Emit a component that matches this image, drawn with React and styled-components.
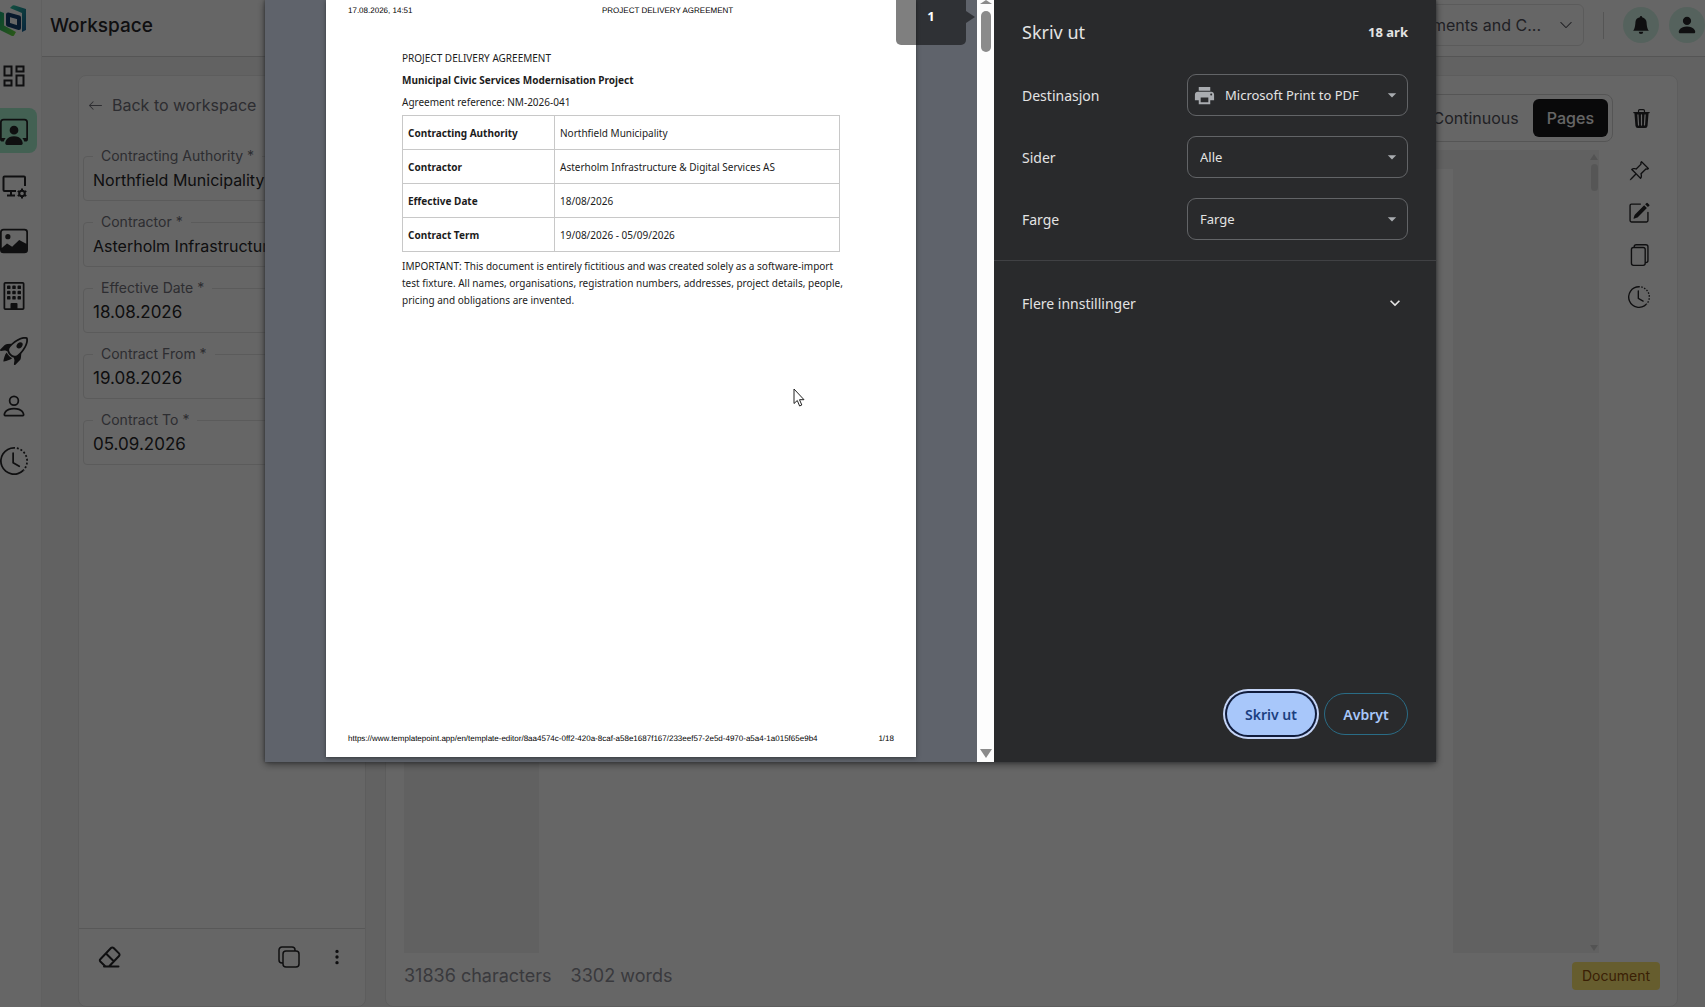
import React from "react";
import styled, { createGlobalStyle } from "styled-components";
import {
  BsPersonWorkspace, BsImage, BsBuilding, BsRocketTakeoff, BsPerson, BsClockHistory,
  BsTrash3Fill, BsPinAngle, BsPencilSquare, BsFiles, BsBellFill, BsPersonFill,
  BsArrowLeft, BsChevronDown, BsThreeDotsVertical,
} from "react-icons/bs";
import { MdPrint, MdExpandMore, MdArrowDropDown } from "react-icons/md";

const ui = `Inter, "Liberation Sans", sans-serif`;
const system = `"Noto Sans", "Open Sans", sans-serif`;

const GlobalStyle = createGlobalStyle`
  *, *::before, *::after { box-sizing: border-box; }
  html, body, #root { height: 100%; }
  body { margin: 0; overflow: hidden; font-family: ${ui}; background: #f5f5f5; color: #27272a; }
  button, input, select { font: inherit; color: inherit; }
`;

const Shell = styled.div`
  display: flex;
  height: 100vh;
`;

const Sidebar = styled.nav`
  flex: 0 0 42px;
  display: flex;
  flex-direction: column;
  gap: 10px;
  background: #fff;
  border-right: 1px solid #f0f0f0;
`;

const LogoLink = styled.a`
  display: block;
  height: 43px;
`;

const NavButton = styled.button`
  display: flex;
  align-items: center;
  width: 37px;
  height: 45px;
  padding: 0;
  border: 0;
  border-radius: 0 8px 8px 0;
  color: #27272a;
  background: ${(p) => (p.$active ? "#a7f3d0" : "transparent")};
  svg { width: 28px; height: 28px; }
`;

const Main = styled.div`
  flex: 1;
  min-width: 0;
  display: flex;
  flex-direction: column;
`;

const Header = styled.header`
  flex: 0 0 57px;
  display: flex;
  align-items: center;
  padding: 0 0 6px 8px;
  background: #fff;
  border-bottom: 1px solid #d4d4d4;
`;

const Title = styled.h1`
  flex: 1;
  margin: 0;
  font-size: 19px;
  font-weight: 500;
`;

const ProjectPicker = styled.button`
  display: flex;
  align-items: center;
  justify-content: space-between;
  width: 320px;
  height: 42px;
  padding: 0 10px;
  border: 1px solid #e4e4e4;
  border-radius: 6px;
  background: #fff;
  font-size: 16px;
  color: #52525b;
  text-align: right;
  span { flex: 1; padding-right: 18px; }
`;

const HeaderRule = styled.div`
  width: 1px;
  height: 27px;
  margin: 0 19px;
  background: #d4d4d4;
`;

const RoundButton = styled.button`
  display: grid;
  place-items: center;
  width: 36px;
  height: 36px;
  margin-right: 10px;
  padding: 0;
  border: 0;
  border-radius: 50%;
  background: #d5f5e8;
  &:last-child { margin-right: 0; }
`;

const Content = styled.main`
  flex: 1;
  min-height: 0;
  display: flex;
  gap: 19px;
  padding: 18px 27px 0 36px;
`;

const Card = styled.section`
  display: flex;
  flex-direction: column;
  background: #fff;
  border: 1px solid #e8e8e8;
  border-radius: 8px;
`;

const DetailsCard = styled(Card)`
  flex: 0 0 288px;
`;

const BackLink = styled.a`
  display: flex;
  align-items: center;
  gap: 9px;
  padding: 19px 9px 0;
  font-size: 16px;
  line-height: 20px;
  color: #71717a;
  text-decoration: none;
`;

const Form = styled.form`
  flex: 1;
  display: flex;
  flex-direction: column;
  gap: 13px;
  padding: 33px 4px 0;
`;

const Field = styled.fieldset`
  height: 53px;
  min-width: 0;
  margin: 0;
  padding: 0 9px;
  border: 1px solid #e4e4e4;
  border-radius: 4px;
`;

const Legend = styled.legend`
  padding: 0 8px;
  font-size: 14px;
  line-height: 16px;
  color: #71717a;
`;

const FieldInput = styled.input`
  display: block;
  width: 100%;
  height: 32px;
  padding: 0;
  border: 0;
  outline: 0;
  background: transparent;
  font-size: ${(p) => (p.$date ? 17 : 16)}px;
`;

const CardActions = styled.div`
  display: flex;
  align-items: center;
  gap: 28px;
  height: 78px;
  padding: 0 19px 22px;
  border-top: 1px solid #dcdcdc;
`;

const IconButton = styled.button`
  display: grid;
  place-items: center;
  padding: 0;
  border: 0;
  background: none;
  color: #27272a;
  margin-right: ${(p) => (p.$push ? "auto" : "0")};
`;

const EditorCard = styled(Card)`
  flex: 1;
  min-width: 0;
  padding: 18px 17px 0 18px;
`;

const Toolbar = styled.div`
  display: flex;
  justify-content: flex-end;
  align-items: center;
  gap: 19px;
  height: 48px;
  padding-right: 9px;
`;

const Segmented = styled.div`
  display: flex;
  align-items: center;
  height: 48px;
  padding: 4px;
  border: 1px solid #d4d4d4;
  border-radius: 8px;
`;

const Segment = styled.button`
  height: 38px;
  padding: 0 14px;
  border: 0;
  border-radius: 6px;
  font-size: 16px;
  font-weight: ${(p) => (p.$on ? 500 : 400)};
  color: ${(p) => (p.$on ? "#fff" : "#52525b")};
  background: ${(p) => (p.$on ? "#18181b" : "transparent")};
`;

const EditorBody = styled.div`
  flex: 1;
  min-height: 0;
  display: flex;
  padding-top: 8px;
`;

const Canvas = styled.div`
  flex: 1;
  display: flex;
  padding: 19px 0 0 135px;
  background: #f3f3f3;
`;

const Paper = styled.div`
  flex: 1;
  margin-right: 136px;
  background: #fff;
`;

const CanvasScroll = styled.div`
  display: flex;
  flex-direction: column;
  align-items: center;
  justify-content: space-between;
  width: 10px;
  margin-top: -15px;
  padding-bottom: 2px;
  color: #d0d0d0;
`;

const ScrollGroup = styled.div`
  display: flex;
  flex-direction: column;
  align-items: center;
  gap: ${(p) => p.$gap}px;
`;

const Thumb = styled.div`
  width: ${(p) => p.$w}px;
  height: ${(p) => p.$h}px;
  border-radius: 5px;
  background: ${(p) => p.$color};
`;

const Tools = styled.div`
  flex: 0 0 61px;
  display: flex;
  flex-direction: column;
  align-items: center;
  gap: 20px;
  padding: 10px 0 0 18px;
`;

const EditorFooter = styled.footer`
  display: flex;
  align-items: center;
  gap: 19px;
  height: 53px;
  padding-bottom: 8px;
  font-size: 18px;
  color: #909098;
`;

const Tag = styled.span`
  margin-left: auto;
  padding: 0 10px;
  border-radius: 4px;
  background: #ffe873;
  color: #92500c;
  font-size: 14px;
  line-height: 28px;
`;

const Backdrop = styled.div`
  position: fixed;
  inset: 0;
  display: flex;
  justify-content: center;
  align-items: flex-start;
  background: rgba(0, 0, 0, 0.6);
`;

const Dialog = styled.div`
  display: flex;
  width: 1171px;
  height: 762px;
  margin-right: 4px;
  box-shadow: 0 0 3px #303236, 0 2px 8px rgba(0, 0, 0, 0.5);
  font-family: ${system};
`;

const Preview = styled.div`
  position: relative;
  flex: 1;
  display: flex;
  justify-content: center;
  padding: 0 61px 5px;
  background: #5f636b;
`;

const Sheet = styled.article`
  flex: 1;
  display: flex;
  flex-direction: column;
  padding: 5px 22px 12px;
  background: #fff;
  color: #1c1c1c;
  box-shadow: 0 1px 4px #33363a;
`;

const SheetLine = styled.div`
  display: grid;
  grid-template-columns: ${(p) => (p.$foot ? "1fr auto" : "254px 1fr")};
  font: 8px/12px "Liberation Sans", sans-serif;
  text-rendering: geometricPrecision;
  color: #000;
`;

const SheetBody = styled.div`
  flex: 1;
  padding: 30px 54px 0;
  font-size: 10px;
  line-height: 22px;
`;

const SheetText = styled.p`
  margin: 0;
  font-weight: ${(p) => (p.$bold ? 700 : 400)};
`;

const Notice = styled.p`
  margin: 6px -10px 0 0;
  line-height: 17px;
`;

const Terms = styled.table`
  width: 100%;
  margin-top: 2px;
  border-collapse: collapse;
  th, td { height: 34px; padding: 0 5px; border: 1px solid #c8c8c8; text-align: left; }
  th { width: 152px; }
`;

const PageFlag = styled.div`
  position: absolute;
  top: 0;
  right: 11px;
  width: 70px;
  height: 45px;
  border-radius: 0 0 5px 5px;
  background: rgba(0, 0, 0, 0.5);
  color: #fff;
  font-size: 13px;
  font-weight: 700;
  line-height: 33px;
  text-align: center;
  &::after {
    content: "";
    position: absolute;
    left: 100%;
    top: 11px;
    border: 6px solid transparent;
    border-left: 9px solid rgba(0, 0, 0, 0.5);
    border-right: 0;
  }
`;

const PreviewScroll = styled.div`
  flex: 0 0 17px;
  display: flex;
  flex-direction: column;
  align-items: center;
  justify-content: space-between;
  padding: 0 0 4px;
  background: #fdfdfd;
  color: #8b8b8b;
`;

const Arrow = styled.div`
  border: ${(p) => p.$size}px solid transparent;
  border-${(p) => (p.$up ? "bottom" : "top")}: ${(p) => p.$tall}px solid currentColor;
  border-${(p) => (p.$up ? "top" : "bottom")}: 0;
`;

const Panel = styled.form`
  flex: 0 0 442px;
  display: flex;
  flex-direction: column;
  background: #292a2c;
  color: #e3e3e3;
  font-size: 14px;
`;

const PanelHead = styled.div`
  display: flex;
  align-items: center;
  justify-content: space-between;
  padding: 20px 28px 0;
  height: 44px;
`;

const PanelTitle = styled.h2`
  margin: 0;
  font-size: 18px;
  font-weight: 400;
`;

const SheetCount = styled.strong`
  font-size: 13px;
`;

const Options = styled.div`
  display: flex;
  flex-direction: column;
  gap: 20px;
  padding: 30px 28px 20px;
  border-bottom: 1px solid #404144;
`;

const Option = styled.div`
  display: flex;
  align-items: center;
  justify-content: space-between;
`;

const SelectBox = styled.div`
  position: relative;
  display: flex;
  align-items: center;
  width: 221px;
  height: 42px;
  border: 1px solid #626467;
  border-radius: 9px;
`;

const Select = styled.select`
  appearance: none;
  width: 100%;
  height: 100%;
  padding: 0 30px 0 ${(p) => (p.$icon ? 37 : 12)}px;
  border: 0;
  outline: 0;
  background: transparent;
  font-size: 13px;
`;

const Glyph = styled.span`
  position: absolute;
  display: flex;
  ${(p) => p.$side}: ${(p) => p.$inset}px;
  color: #a9acb0;
  pointer-events: none;
`;

const More = styled.button`
  display: flex;
  align-items: center;
  justify-content: space-between;
  margin: 0;
  padding: 32px 31px 0 28px;
  border: 0;
  background: none;
`;

const Buttons = styled.div`
  display: flex;
  justify-content: flex-end;
  gap: 9px;
  margin-top: auto;
  padding: 0 28px 27px;
`;

const PillButton = styled.button`
  height: 42px;
  padding: 0;
  width: ${(p) => (p.$primary ? 88 : 84)}px;
  border-radius: 21px;
  font-weight: 600;
  border: ${(p) => (p.$primary ? "0" : "1px solid #296c86")};
  background: ${(p) => (p.$primary ? "#a8c7fa" : "transparent")};
  color: ${(p) => (p.$primary ? "#1b3f80" : "#a8c7fa")};
  box-shadow: ${(p) => (p.$primary ? "0 0 0 2px #101c3c, 0 0 0 4px #c4d4f6" : "none")};
`;

const Pointer = styled.svg`
  position: absolute;
  left: 528px;
  top: 388px;
`;

const Logo = () => (
  <svg width="28" height="38" viewBox="0 0 28 38" fill="none" aria-hidden="true">
    <defs>
      <linearGradient id="leaf" x1="0" y1="0" x2="1" y2="1">
        <stop offset="0" stopColor="#16a87a" /><stop offset="1" stopColor="#6fe03a" />
      </linearGradient>
      <linearGradient id="sea" x1="0" y1="0" x2="1" y2="1">
        <stop offset="0" stopColor="#2cc9a0" /><stop offset="1" stopColor="#175a96" />
      </linearGradient>
    </defs>
    <path d="M0 11.500 L4 13 V25.500 L16 32 L14 35.500 Q13 36.500 11 35.500 L0 30Z" fill="url(#leaf)" />
    <path d="M10 8 L12 6 Q13 5 15 5.500 L26 9 V30 L22 32 V13Z" fill="url(#sea)" />
    <path d="M8 14.500 L19 17.500 V28 L8 24.500Z" stroke="#14406e" strokeWidth="4" strokeLinejoin="round" />
  </svg>
);

const DashboardIcon = () => (
  <svg viewBox="0 0 28 28" fill="none" stroke="currentColor" strokeWidth="2" aria-hidden="true">
    <path d="M4.500 4.500h7v9h-7zM16.500 4.500h7v5h-7zM16.500 13.500h7v10h-7zM4.500 18.500h7v5h-7z" />
  </svg>
);

const MonitorGearIcon = () => (
  <svg viewBox="0 0 28 28" fill="none" stroke="currentColor" strokeWidth="2" aria-hidden="true">
    <path d="M16 19H4.500a1 1 0 0 1-1-1V5.500a1 1 0 0 1 1-1h19.500a1 1 0 0 1 1 1V14M11 19v4M7 23.500h8" />
    <circle cx="22" cy="21.500" r="2.800" />
    <path d="M22 16.500v2M22 24.500v2M17.700 19l1.700 1M24.600 23l1.700 1M17.700 24l1.700-1M24.600 20l1.700-1" />
  </svg>
);

const EraserIcon = () => (
  <svg width="24" height="24" viewBox="0 0 24 24" fill="none" stroke="currentColor" strokeWidth="2" strokeLinecap="round" strokeLinejoin="round" aria-hidden="true">
    <path d="M7.500 21.500 L2.300 16.500 a1.600 1.600 0 0 1 0-2.300 L13 3 a1.800 1.800 0 0 1 2.600 0 L21 8.400 a1.800 1.800 0 0 1 0 2.600 L11 21.500 M6 21.500 H20.500 M8 8.500 L15.500 16" />
  </svg>
);

const NAV = [
  ["Dashboard", DashboardIcon],
  ["Workspace", BsPersonWorkspace, true],
  ["System", MonitorGearIcon],
  ["Images", BsImage],
  ["Company", BsBuilding],
  ["Launch", BsRocketTakeoff],
  ["Profile", BsPerson],
  ["History", BsClockHistory],
];

const FIELDS = [
  ["Contracting Authority *", "Northfield Municipality"],
  ["Contractor *", "Asterholm Infrastructure & Digital Services AS"],
  ["Effective Date *", "18.08.2026", true],
  ["Contract From *", "19.08.2026", true],
  ["Contract To *", "05.09.2026", true],
];

const TERMS = [
  ["Contracting Authority", "Northfield Municipality"],
  ["Contractor", "Asterholm Infrastructure & Digital Services AS"],
  ["Effective Date", "18/08/2026"],
  ["Contract Term", "19/08/2026 - 05/09/2026"],
];

const OPTIONS = [
  ["Destinasjon", "Microsoft Print to PDF", true],
  ["Sider", "Alle"],
  ["Farge", "Farge"],
];

export default function App() {
  return (
    <>
      <GlobalStyle />
      <Shell>
        <Sidebar>
          <LogoLink href="#" aria-label="Home"><Logo /></LogoLink>
          {NAV.map(([label, Icon, active]) => (
            <NavButton key={label} $active={active} aria-label={label}><Icon /></NavButton>
          ))}
        </Sidebar>
        <Main>
          <Header>
            <Title>Workspace</Title>
            <ProjectPicker><span>ments and C...</span><BsChevronDown size={14} /></ProjectPicker>
            <HeaderRule />
            <RoundButton aria-label="Notifications"><BsBellFill size={18} /></RoundButton>
            <RoundButton aria-label="Account"><BsPersonFill size={22} /></RoundButton>
          </Header>
          <Content>
            <DetailsCard>
              <BackLink href="#"><BsArrowLeft size={15} />Back to workspace</BackLink>
              <Form>
                {FIELDS.map(([label, value, date]) => (
                  <Field key={label}>
                    <Legend>{label}</Legend>
                    <FieldInput aria-label={label} defaultValue={value} $date={date} />
                  </Field>
                ))}
              </Form>
              <CardActions>
                <IconButton $push aria-label="Clear"><EraserIcon /></IconButton>
                <IconButton aria-label="Duplicate">
                  <svg width="22" height="22" viewBox="0 0 22 22" fill="none" stroke="currentColor" strokeWidth="1.500" aria-hidden="true">
                    <rect x="5" y="5" width="16" height="16" rx="3" />
                    <path d="M5 17H4a3 3 0 0 1-3-3V4a3 3 0 0 1 3-3h10a3 3 0 0 1 3 3v1" />
                  </svg>
                </IconButton>
                <IconButton aria-label="More"><BsThreeDotsVertical size={18} /></IconButton>
              </CardActions>
            </DetailsCard>
            <EditorCard>
              <Toolbar>
                <Segmented>
                  <Segment>Continuous</Segment>
                  <Segment $on>Pages</Segment>
                </Segmented>
                <IconButton aria-label="Delete"><BsTrash3Fill size={19} /></IconButton>
              </Toolbar>
              <EditorBody>
                <Canvas>
                  <Paper />
                  <CanvasScroll>
                    <ScrollGroup $gap={4}>
                      <Arrow $up $size={4} $tall={6} />
                      <Thumb $w={7} $h={27} $color="#d8d8d8" />
                    </ScrollGroup>
                    <Arrow $size={4} $tall={6} />
                  </CanvasScroll>
                </Canvas>
                <Tools>
                  <IconButton aria-label="Pin"><BsPinAngle size={22} /></IconButton>
                  <IconButton aria-label="Edit"><BsPencilSquare size={22} /></IconButton>
                  <IconButton aria-label="Files"><BsFiles size={22} /></IconButton>
                  <IconButton aria-label="History"><BsClockHistory size={22} /></IconButton>
                </Tools>
              </EditorBody>
              <EditorFooter>
                <span>31836 characters</span>
                <span>3302 words</span>
                <Tag>Document</Tag>
              </EditorFooter>
            </EditorCard>
          </Content>
        </Main>
      </Shell>
      <Backdrop>
        <Dialog role="dialog" aria-label="Skriv ut">
          <Preview>
            <Sheet>
              <SheetLine><span>17.08.2026, 14:51</span><span>PROJECT DELIVERY AGREEMENT</span></SheetLine>
              <SheetBody>
                <SheetText>PROJECT DELIVERY AGREEMENT</SheetText>
                <SheetText $bold>Municipal Civic Services Modernisation Project</SheetText>
                <SheetText>Agreement reference: NM-2026-041</SheetText>
                <Terms>
                  <tbody>
                    {TERMS.map(([k, v]) => (
                      <tr key={k}><th scope="row">{k}</th><td>{v}</td></tr>
                    ))}
                  </tbody>
                </Terms>
                <Notice>
                  IMPORTANT: This document is entirely fictitious and was created solely as a software-import
                  test fixture. All names, organisations, registration numbers, addresses, project details, people,
                  pricing and obligations are invented.
                </Notice>
              </SheetBody>
              <SheetLine $foot>
                <span>https://www.templatepoint.app/en/template-editor/8aa4574c-0ff2-420a-8caf-a58e1687f167/233eef57-2e5d-4970-a5a4-1a015f65e9b4</span>
                <span>1/18</span>
              </SheetLine>
            </Sheet>
            <PageFlag>1</PageFlag>
            <Pointer width="12" height="20" viewBox="0 0 12 20" aria-hidden="true">
              <path d="M1 1v14.500l3.300-3 2.300 5.500 2.200-1-2.300-5.300H11z" fill="#fff" stroke="#222" />
            </Pointer>
          </Preview>
          <PreviewScroll>
            <ScrollGroup $gap={7}>
              <Arrow $up $size={6} $tall={4} />
              <Thumb $w={10} $h={41} $color="#8b8b8b" />
            </ScrollGroup>
            <Arrow $size={6} $tall={9} />
          </PreviewScroll>
          <Panel onSubmit={(e) => e.preventDefault()}>
            <PanelHead><PanelTitle>Skriv ut</PanelTitle><SheetCount>18 ark</SheetCount></PanelHead>
            <Options>
              {OPTIONS.map(([label, value, icon]) => (
                <Option key={label}>
                  <label htmlFor={label}>{label}</label>
                  <SelectBox>
                    {icon && <Glyph $side="left" $inset={5}><MdPrint size={23} /></Glyph>}
                    <Select id={label} $icon={icon}><option>{value}</option></Select>
                    <Glyph $side="right" $inset={5}><MdArrowDropDown size={20} /></Glyph>
                  </SelectBox>
                </Option>
              ))}
            </Options>
            <More type="button">Flere innstillinger<MdExpandMore size={20} /></More>
            <Buttons>
              <PillButton $primary>Skriv ut</PillButton>
              <PillButton type="button">Avbryt</PillButton>
            </Buttons>
          </Panel>
        </Dialog>
      </Backdrop>
    </>
  );
}
